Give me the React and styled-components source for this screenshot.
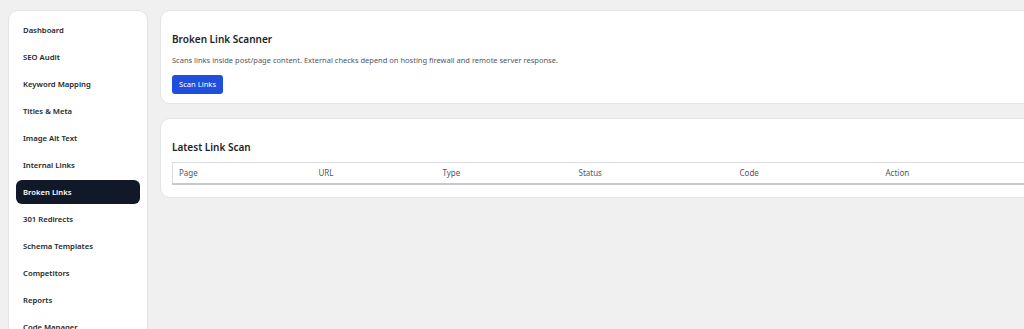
import React from "react";
import styled, { createGlobalStyle } from "styled-components";

const Global = createGlobalStyle`
  html, body { margin: 0; padding: 0; background: #f0f0f1; overflow: hidden; }
  body { font-family: "Noto Sans", "Open Sans", Arial, sans-serif; color: #1d2327; }
`;

const Layout = styled.div`
  display: flex;
  align-items: flex-start;
  gap: 12px;
  padding: 10px 0 0 8px;
  width: 1200px;
`;

const Sidebar = styled.nav`
  flex: 0 0 140px;
  box-sizing: border-box;
  background: #fff;
  border: 1px solid #e2e4e7;
  border-radius: 10px;
  padding: 7px 7px 20px;
  display: flex;
  flex-direction: column;
  gap: 3px;
`;

const NavItem = styled.a`
  display: flex;
  align-items: center;
  height: 24px;
  padding: 0 7px;
  border-radius: 6px;
  font-size: 7.7px;
  font-weight: 600;
  color: ${(p) => (p.$active ? "#ffffff" : "#23282d")};
  background: ${(p) => (p.$active ? "#111827" : "transparent")};
  text-decoration: none;
  white-space: nowrap;
`;

const Main = styled.main`
  flex: 1;
  display: flex;
  flex-direction: column;
  gap: 14px;
`;

const Card = styled.section`
  box-sizing: border-box;
  background: #fff;
  border: 1px solid #e2e4e7;
  border-radius: 10px;
  padding: ${(p) => p.$pad};
  height: ${(p) => p.$h};
`;

const Title = styled.h2`
  margin: 0;
  font-size: 10px;
  font-weight: 600;
  color: #1d2327;
  line-height: 14px;
`;

const Desc = styled.p`
  margin: 8px 0 4px;
  font-size: 7.5px;
  color: #50575e;
  line-height: 12px;
`;

const Button = styled.button`
  height: 19px;
  padding: 0 7px;
  border: none;
  border-radius: 3px;
  background: #1f4fdc;
  color: #fff;
  font-family: inherit;
  font-size: 7.6px;
  cursor: pointer;
`;

const Table = styled.table`
  margin-top: 8px;
  width: 960px;
  border-collapse: collapse;
  table-layout: fixed;
  border: 1px solid #dcdcde;
  border-bottom: 2px solid #c8c9cc;
`;

const Th = styled.th`
  box-sizing: border-box;
  text-align: left;
  font-weight: 400;
  font-size: 8px;
  color: #50575e;
  height: 21px;
  padding: 0 0 0 6px;
  width: ${(p) => p.$w};
`;

const items = [
  "Dashboard",
  "SEO Audit",
  "Keyword Mapping",
  "Titles & Meta",
  "Image Alt Text",
  "Internal Links",
  "Broken Links",
  "301 Redirects",
  "Schema Templates",
  "Competitors",
  "Reports",
  "Code Manager",
];

const cols = [
  ["Page", "140px"],
  ["URL", "124px"],
  ["Type", "136px"],
  ["Status", "161px"],
  ["Code", "146px"],
  ["Action", "auto"],
];

export default function App() {
  return (
    <>
      <Global />
      <Layout>
        <Sidebar>
          {items.map((t) => (
            <NavItem key={t} $active={t === "Broken Links"}>
              {t}
            </NavItem>
          ))}
        </Sidebar>
        <Main>
          <Card $pad="21px 11px 0" $h="94px">
            <Title>Broken Link Scanner</Title>
            <Desc>
              Scans links inside post/page content. External checks depend on
              hosting firewall and remote server response.
            </Desc>
            <Button>Scan Links</Button>
          </Card>
          <Card $pad="21px 11px 12px" $h="80px">
            <Title>Latest Link Scan</Title>
            <Table>
              <thead>
                <tr>
                  {cols.map(([c, w]) => (
                    <Th key={c} $w={w}>
                      {c}
                    </Th>
                  ))}
                </tr>
              </thead>
            </Table>
          </Card>
        </Main>
      </Layout>
    </>
  );
}
